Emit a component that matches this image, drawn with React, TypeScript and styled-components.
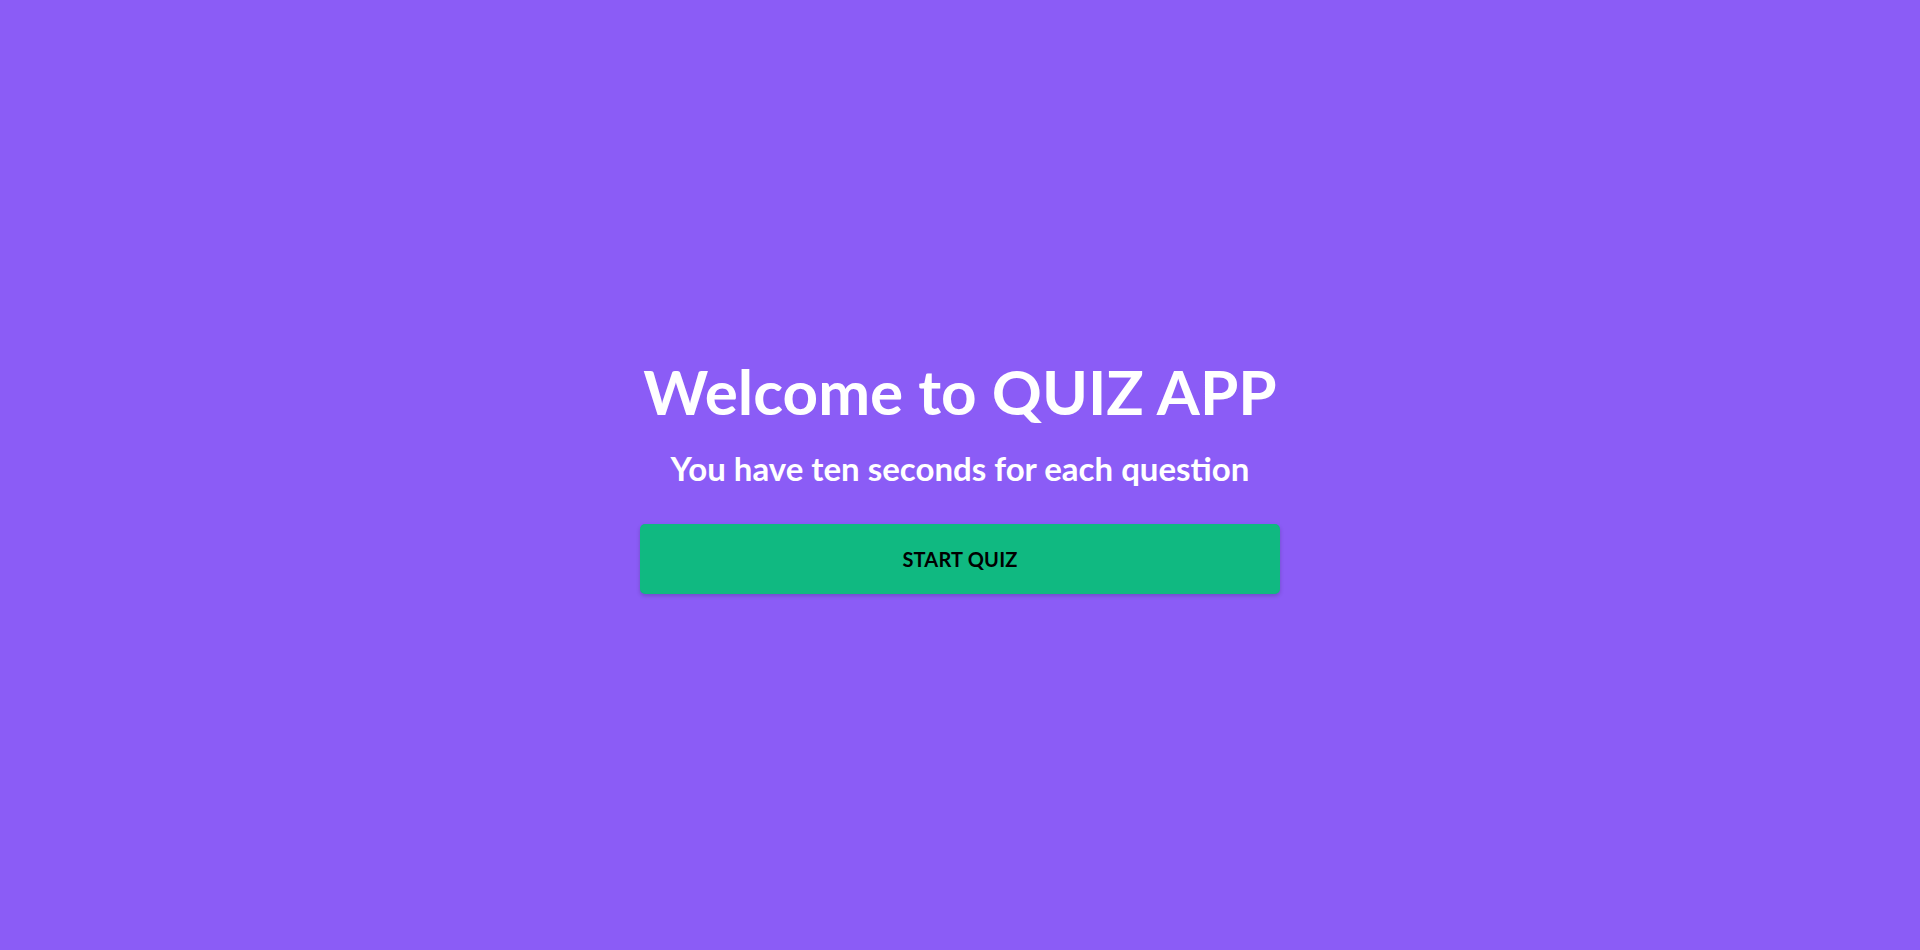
import React from "react";
import styled, { createGlobalStyle } from "styled-components";

const GlobalStyle = createGlobalStyle`
  * { box-sizing: border-box; }
  body {
    margin: 0;
    background: #8b5cf6;
    font-family: "Lato", "Noto Sans", sans-serif;
  }
`;

const Page = styled.main`
  min-height: 100vh;
  display: flex;
  align-items: center;
  justify-content: center;
`;

const Card = styled.section`
  width: 640px;
  display: flex;
  flex-direction: column;
  align-items: center;
  padding-bottom: 2px;
`;

const Title = styled.h1`
  margin: 0;
  font-size: 62px;
  font-weight: 700;
  line-height: 1.2;
  color: #ffffff;
  white-space: nowrap;
`;

const Subtitle = styled.h2`
  margin: 21px 0 0;
  font-size: 33px;
  font-weight: 700;
  line-height: 1.2;
  color: #ffffff;
  white-space: nowrap;
`;

const StartButton = styled.button`
  margin-top: 36px;
  width: 100%;
  height: 70px;
  border: none;
  border-radius: 5px;
  background: #10b981;
  color: #000000;
  font-family: "Lato", "Noto Sans", sans-serif;
  font-size: 20px;
  font-weight: 700;
  letter-spacing: 0.2px;
  cursor: pointer;
  box-shadow: 0 2px 4px rgba(0, 0, 0, 0.18);
  display: flex;
  align-items: center;
  justify-content: center;
`;

export default function App() {
  return (
    <>
      <GlobalStyle />
      <Page>
        <Card>
          <Title>Welcome to QUIZ APP</Title>
          <Subtitle>You have ten seconds for each question</Subtitle>
          <StartButton>START QUIZ</StartButton>
        </Card>
      </Page>
    </>
  );
}
